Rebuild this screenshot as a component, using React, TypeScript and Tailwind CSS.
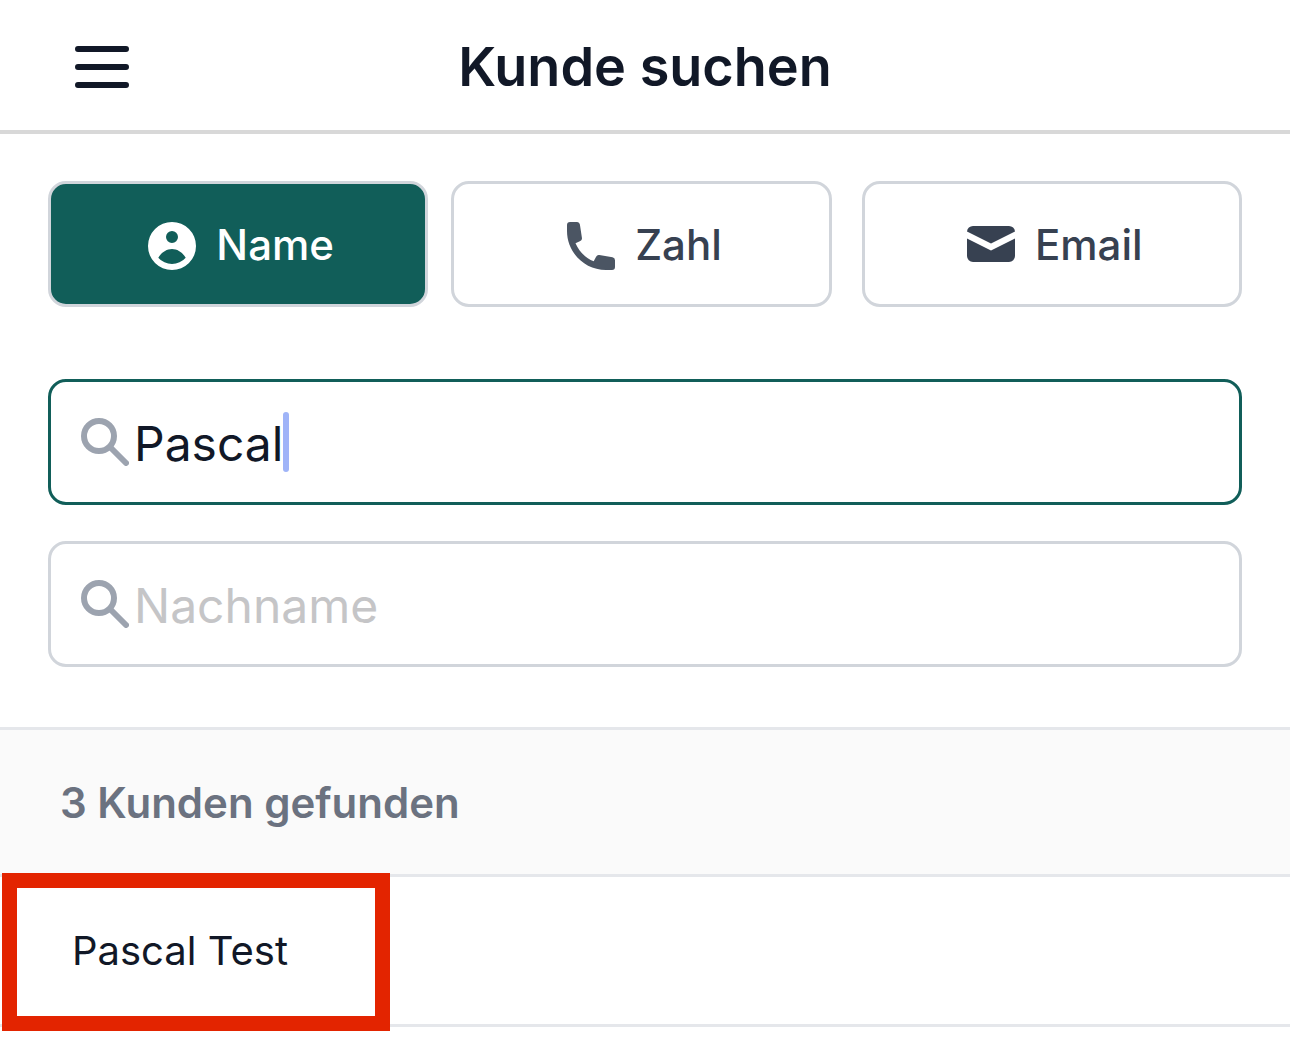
import { useState } from 'react';
import type { ReactNode } from 'react';
import clsx from 'clsx';

type Mode = 'name' | 'phone' | 'email';

function MenuIcon() {
  return (
    <svg viewBox="0 0 54 42" className="h-[42px] w-[54px]" aria-hidden="true">
      <path d="M3 3h48M3 21h48M3 39h48" stroke="currentColor" strokeWidth="6" strokeLinecap="round" />
    </svg>
  );
}

function UserIcon() {
  return (
    <svg viewBox="-6 -8 60 60" className="size-[60px]" fill="currentColor" aria-hidden="true">
      <path
        fillRule="evenodd"
        d="M24 0a24 24 0 1 0 0 48a24 24 0 1 0 0-48ZM24 9a6 6 0 1 1 0 12a6 6 0 1 1 0-12ZM10.3 35.7C13.5 30.5 18.4 27 24 27s10.5 3.5 13.7 8.7A18 18 0 0 1 10.3 35.7Z"
      />
    </svg>
  );
}

function PhoneIcon() {
  return (
    <svg viewBox="-6 -8 60 60" className="size-[60px] text-[#4b5563]" fill="currentColor" aria-hidden="true">
      <path d="M3 0h7.2a3 3 0 0 1 2.7 2.5L14.9 15.8a3 3 0 0 1-1.6 3.2L8.5 21.3C12 29.5 18.5 36 26.7 39.3L29.1 34.7a3 3 0 0 1 3.2-1.6L45.5 35.3A3 3 0 0 1 48 38.2V45a3 3 0 0 1-3 3h-6C17.5 48 0 30.5 0 9V3a3 3 0 0 1 3-3Z" />
    </svg>
  );
}

function MailIcon() {
  return (
    <svg viewBox="-6 -12 60 60" className="size-[60px]" fill="currentColor" aria-hidden="true">
      <path d="M0 5.6A6 6 0 0 1 6 0h36a6 6 0 0 1 6 5.6L24 17.6Z" />
      <path d="M0 12.4 24 24.4 48 12.4V30a6 6 0 0 1-6 6H6a6 6 0 0 1-6-6Z" />
    </svg>
  );
}

function SearchIcon() {
  return (
    <svg viewBox="0 0 48 48" className="size-12 shrink-0 text-[#9ca3af]" fill="none" stroke="currentColor" strokeWidth="6" aria-hidden="true">
      <circle cx="18" cy="18" r="15" />
      <path d="M29 29 45 45" strokeLinecap="round" />
    </svg>
  );
}

const modes: { id: Mode; label: string; icon: ReactNode; className: string }[] = [
  { id: 'name', label: 'Name', icon: <UserIcon />, className: '' },
  { id: 'phone', label: 'Zahl', icon: <PhoneIcon />, className: 'ml-[23px]' },
  { id: 'email', label: 'Email', icon: <MailIcon />, className: 'ml-[30px]' },
];

export default function App() {
  const [mode, setMode] = useState<Mode>('name');
  const [firstName, setFirstName] = useState('Pascal');
  const [lastName, setLastName] = useState('');

  return (
    <div className="min-h-screen bg-white font-['Inter',sans-serif] text-[#111827]">
      <header className="grid h-[134px] grid-cols-[1fr_auto_1fr] items-center border-b-4 border-[#d8d8d8] px-[75px] pt-1">
        <button type="button" aria-label="Menü" className="justify-self-start">
          <MenuIcon />
        </button>
        <h1 className="text-[54px] leading-[66px] font-semibold">Kunde suchen</h1>
      </header>

      <main>
        <section className="px-12 pt-[47px] pb-[60px]">
          <div className="flex">
            {modes.map((m) => (
              <button
                key={m.id}
                type="button"
                aria-pressed={mode === m.id}
                onClick={() => setMode(m.id)}
                className={clsx(
                  'flex h-[126px] flex-1 items-center justify-center gap-3.5 rounded-[18px] border-3 border-[#d1d5db] text-[42px] leading-[60px] font-medium',
                  mode === m.id ? 'bg-[#115e59] text-white' : 'bg-white text-[#374151]',
                  m.className,
                )}
              >
                {m.icon}
                <span className="pt-0.5">{m.label}</span>
              </button>
            ))}
          </div>

          <label className="mt-[72px] flex h-[126px] items-center rounded-[18px] border-3 border-[#115e59] px-[30px]">
            <SearchIcon />
            <input
              type="text"
              aria-label="Vorname"
              value={firstName}
              onChange={(e) => setFirstName(e.target.value)}
              className="ml-[5px] field-sizing-content pt-1 text-5xl leading-[60px] caret-transparent outline-none"
            />
            <span className="h-[60px] w-1.5 rounded-full bg-[#9fb4f8]" />
          </label>

          <label className="mt-9 flex h-[126px] items-center rounded-[18px] border-3 border-[#d1d5db] px-[30px]">
            <SearchIcon />
            <input
              type="text"
              aria-label="Nachname"
              placeholder="Nachname"
              value={lastName}
              onChange={(e) => setLastName(e.target.value)}
              className="ml-[5px] min-w-0 flex-1 pt-1 text-5xl leading-[60px] outline-none placeholder:text-[#c5c5c7]"
            />
          </label>
        </section>

        <section>
          <h2 className="border-y-3 border-[#e5e7eb] bg-[#fafafa] px-[60px] pt-[43px] pb-[41px] text-[42px] leading-[60px] font-semibold text-[#6b7280]">
            3 Kunden gefunden
          </h2>
          <ul>
            <li className="relative border-b-3 border-[#e5e7eb]">
              <a href="#pascal-test" className="flex h-[147px] items-center px-[72px] text-[40px] leading-[60px]">
                Pascal Test
              </a>
              <span className="pointer-events-none absolute -top-1 left-0.5 h-[158px] w-[388px] border-15 border-[#e32400]" />
            </li>
          </ul>
        </section>
      </main>
    </div>
  );
}
